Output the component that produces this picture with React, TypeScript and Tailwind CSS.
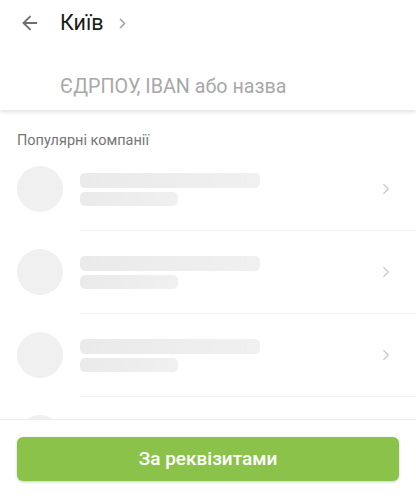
import { ArrowLeft, ChevronRight } from "lucide-react"

const rows = [0, 1, 2, 3]

function SkeletonRow() {
  return (
    <div className="flex">
      <div className="pl-[17px] pr-[17px] pt-[18px]">
        <div className="w-[46px] h-[46px] rounded-full bg-[#f0f0f0]" />
      </div>
      <div className="flex-1 border-b border-[#f0f0f0] flex items-center h-[83px]">
        <div className="flex-1 flex flex-col gap-[4px]">
          <div className="w-[180px] h-[15px] rounded-[5px] bg-gradient-to-r from-[#eaeaea] to-[#f0f0f0]" />
          <div className="w-[98px] h-[14px] rounded-[5px] bg-gradient-to-r from-[#eaeaea] to-[#f0f0f0]" />
        </div>
        <ChevronRight size={18} strokeWidth={1.5} className="text-[#c8c8c8] mr-[21px]" />
      </div>
    </div>
  )
}

export default function App() {
  return (
    <div className="h-[500px] w-[416px] flex flex-col bg-white overflow-hidden font-['Roboto',_sans-serif]">
      {/* Header */}
      <div className="relative z-10 bg-white shadow-[0_2px_4px_rgba(0,0,0,0.12)] h-[110px] shrink-0">
        <div className="flex items-center h-[44px] pt-[1px]">
          <ArrowLeft size={22} strokeWidth={2} className="text-[#6e6e6e] ml-[19px]" />
          <span className="ml-[19px] text-[21.5px] text-[#1a1a1a] leading-none">Київ</span>
          <ChevronRight size={17} strokeWidth={2} className="text-[#9e9e9e] ml-[10px] mt-[1px]" />
        </div>
        <div className="pl-[60px] pt-[33px] text-[19.7px] leading-none text-[#a8a8a8]">ЄДРПОУ, IBAN або назва</div>
      </div>

      {/* List */}
      <div className="flex-1 overflow-hidden">
        <div className="pl-[17px] pt-[24px] text-[14.5px] leading-[14px] text-[#757575]">Популярні компанії</div>
        {rows.map((r) => (
          <SkeletonRow key={r} />
        ))}
      </div>

      {/* Bottom bar */}
      <div className="relative z-10 bg-white border-t border-[#ededed] h-[81px] shrink-0 px-[17px] pt-[17px]">
        <button className="w-full h-[44px] rounded-[6px] bg-[#8bc34a] text-white text-[19px] font-medium shadow-[0_1px_3px_rgba(0,0,0,0.2)]">
          За реквізитами
        </button>
      </div>
    </div>
  )
}
